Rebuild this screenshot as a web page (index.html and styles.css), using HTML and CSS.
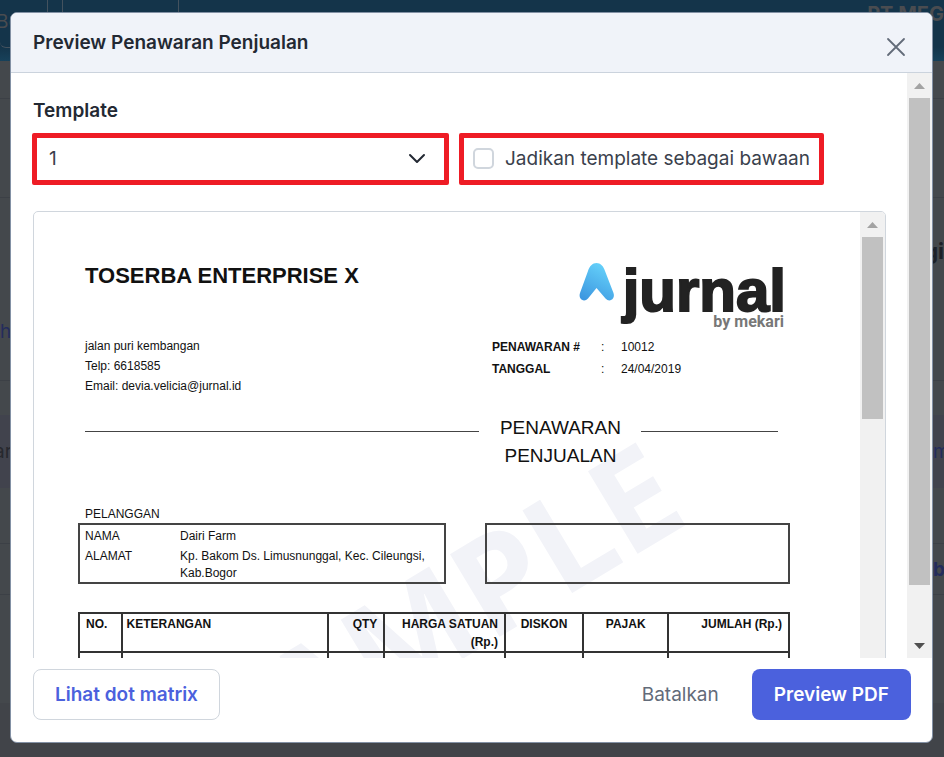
FILE: index.html
```
<!DOCTYPE html>
<html lang="id">
<head>
<meta charset="utf-8">
<title>Preview Penawaran Penjualan</title>
<link rel="stylesheet" href="styles.css">
</head>
<body>
<div class="page" aria-hidden="true">
  <div class="topbar">
    <div class="topbar-tab first">Be</div>
    <div class="topbar-tab"></div>
    <div class="company">PT MEG</div>
  </div>
  <div class="page-row gap-row"></div>
  <div class="page-row tall-row"></div>
  <div class="page-row title-row"><span></span><b>gi</b></div>
  <div class="page-row link-row"><span>h</span></div>
  <div class="page-row space-row"></div>
  <div class="page-row shade-row"><span>ar</span><a>m</a></div>
  <div class="page-row blank-row"></div>
  <div class="page-row foot-row"><span></span><b>ba</b></div>
</div>

<div class="modal" role="dialog" aria-labelledby="modalTitle">
  <div class="modal-header">
    <h1 class="modal-title" id="modalTitle">Preview Penawaran Penjualan</h1>
    <button class="close" aria-label="Tutup">
      <svg width="20" height="20" viewBox="0 0 20 20" fill="none" stroke="#626b79" stroke-width="1.800" stroke-linecap="round">
        <path d="M2 2l16 16M18 2L2 18"/>
      </svg>
    </button>
  </div>

  <div class="modal-body">
    <div class="modal-content">
      <label class="label" for="template">Template</label>
      <div class="options">
        <div class="marked select-box">
          <select id="template" class="select">
            <option>1</option>
          </select>
          <svg class="chevron" width="18" height="12" viewBox="0 0 18 12" fill="none" stroke="#232933" stroke-width="2" stroke-linecap="round" stroke-linejoin="round">
            <path d="M2 2l7 7 7-7"/>
          </svg>
        </div>
        <div class="marked check-box">
          <input type="checkbox" class="check" id="default">
          <label for="default">Jadikan template sebagai bawaan</label>
        </div>
      </div>

      <div class="frame">
        <div class="doc">
          <svg class="watermark" width="826" height="446" viewBox="0 0 826 446">
            <text transform="translate(658 309) rotate(-31)" text-anchor="end">SAMPLE</text>
          </svg>
          <div class="doc-header">
            <div>
              <h2 class="doc-company">TOSERBA ENTERPRISE X</h2>
              <div class="doc-address">
                jalan puri kembangan<br>
                Telp: 6618585<br>
                Email: devia.velicia@jurnal.id
              </div>
            </div>
            <div>
              <svg class="logo" width="208" height="74" viewBox="0 0 208 74">
                <defs>
                  <linearGradient id="mark" x1="0.7" y1="0" x2="0.2" y2="1">
                    <stop offset="0" stop-color="#66d3fb"/>
                    <stop offset="1" stop-color="#3d97e0"/>
                  </linearGradient>
                </defs>
                <path fill="url(#mark)" d="M10 9C11.500 4 14.500 1 18.500 1s7 3 8.500 8L35.500 31c2 6-4 10-8 5.500L18.500 26 10 36.500C6 41 0 37 2 31z"/>
                <text class="logo-name" x="208" y="49" text-anchor="end">jurnal</text>
                <text class="logo-by" x="206" y="65" text-anchor="end">by mekari</text>
              </svg>
              <table class="meta">
                <tr><th>PENAWARAN #</th><td class="colon">:</td><td>10012</td></tr>
                <tr><th>TANGGAL</th><td class="colon">:</td><td>24/04/2019</td></tr>
              </table>
            </div>
          </div>

          <div class="doc-title">
            <span class="rule rule-left"></span>
            <h3>PENAWARAN PENJUALAN</h3>
            <span class="rule rule-right"></span>
          </div>

          <div class="doc-label">PELANGGAN</div>
          <div class="parties">
            <dl class="party">
              <dt>NAMA</dt><dd>Dairi Farm</dd>
              <dt>ALAMAT</dt><dd>Kp. Bakom Ds. Limusnunggal, Kec. Cileungsi, Kab.Bogor</dd>
            </dl>
            <div class="party"></div>
          </div>

          <table class="items">
            <thead>
              <tr>
                <th class="col-no">NO.</th>
                <th class="col-desc">KETERANGAN</th>
                <th class="col-qty">QTY</th>
                <th class="col-price">HARGA SATUAN (Rp.)</th>
                <th class="col-disc">DISKON</th>
                <th class="col-tax">PAJAK</th>
                <th class="col-total">JUMLAH (Rp.)</th>
              </tr>
            </thead>
            <tbody>
              <tr><td></td><td></td><td></td><td></td><td></td><td></td><td></td></tr>
            </tbody>
          </table>
        </div>
        <div class="scrollbar">
          <svg class="arrow" width="11" height="6" viewBox="0 0 11 6"><path fill="#a3a3a3" d="M5.500 0L11 6H0z"/></svg>
          <div class="thumb thumb-doc"></div>
        </div>
      </div>
    </div>
    <div class="scrollbar">
      <svg class="arrow" width="11" height="6" viewBox="0 0 11 6"><path fill="#a3a3a3" d="M5.500 0L11 6H0z"/></svg>
      <div class="track"><div class="thumb thumb-body"></div></div>
      <svg class="arrow" width="11" height="6" viewBox="0 0 11 6"><path fill="#505050" d="M5.500 6L11 0H0z"/></svg>
    </div>
  </div>

  <div class="modal-footer">
    <button class="btn btn-outline">Lihat dot matrix</button>
    <button class="btn btn-text">Batalkan</button>
    <button class="btn btn-primary">Preview PDF</button>
  </div>
</div>
</body>
</html>
```
FILE: styles.css
```
* {
  box-sizing: border-box;
}

body {
  margin: 0;
  font-family: Inter, "Liberation Sans", sans-serif;
  font-size: 19px;
  color: #232933;
  background-color: #414449;
  overflow: hidden;
}

button,
select {
  font: inherit;
}

/* dimmed page behind the dialog */
.page {
  min-height: 703px;
  background-color: #44484c;
}

.topbar {
  display: flex;
  gap: 14px;
  height: 61px;
  background: linear-gradient(#14344a 47px, #17415a 61px);
  color: #4a4c50;
}

.topbar-tab {
  width: 117px;
  height: 48px;
  border: 1px solid #44525e;
  border-top: none;
  border-radius: 0 0 6px 6px;
}

.topbar-tab.first {
  width: 48px;
  border-left: none;
  line-height: 44px;
  text-indent: -4px;
}

.company {
  margin-left: auto;
  font-size: 20px;
  font-weight: 700;
  line-height: 28px;
}

.page-row {
  display: flex;
  justify-content: space-between;
  align-items: center;
  border-bottom: 1px solid #3c4046;
  color: #242c5c;
  white-space: nowrap;
}

.page-row b {
  width: 11px;
  overflow: hidden;
}

.gap-row {
  height: 38px;
}

.tall-row {
  height: 99px;
}

.title-row {
  height: 106px;
  color: #1c2027;
  font-size: 22px;
  border: none;
}

.title-row b {
  width: auto;
}

.link-row {
  height: 77px;
  padding-bottom: 22px;
}

.space-row {
  height: 34px;
  border: none;
}

.shade-row {
  height: 73px;
  background-color: #41434d;
  border: none;
}

.shade-row span {
  color: #26282e;
  text-indent: -6px;
}

.shade-row a {
  width: 11px;
  overflow: hidden;
}

.blank-row {
  height: 56px;
}

.foot-row {
  height: 51px;
}

/* dialog */
.modal {
  position: absolute;
  inset: 12px 11px 14px 10px;
  display: flex;
  flex-direction: column;
  background-color: #fff;
  border: 1px solid #8391a5;
  border-radius: 7px;
  overflow: hidden;
}

.modal-header {
  display: flex;
  justify-content: space-between;
  align-items: center;
  height: 60px;
  flex-shrink: 0;
  padding: 0 26px 0 22px;
  background-color: #f0f3f9;
  border-bottom: 1px solid #cbd3dd;
}

.modal-title {
  margin: 0;
  font-size: 19px;
  font-weight: 600;
}

.close {
  display: flex;
  margin-top: 8px;
  padding: 0;
  border: none;
  background: none;
  cursor: pointer;
}

.modal-body {
  display: flex;
  flex: 1;
  min-height: 0;
}

.modal-content {
  flex: 1;
  min-width: 0;
  padding: 26px 21px 0 22px;
  overflow: hidden;
}

.label {
  display: block;
  line-height: 24px;
  font-weight: 600;
}

.options {
  display: flex;
  gap: 10px;
  margin: 10px 0 26px -1px;
}

.marked {
  display: flex;
  align-items: center;
  height: 52px;
  border: 5px solid #ee1c25;
  border-radius: 2px;
  color: #3a414c;
}

.select-box {
  position: relative;
  width: 417px;
}

.select {
  width: 100%;
  height: 100%;
  padding: 0 12px 2px;
  border: none;
  appearance: none;
  background: #fff;
  color: #3a414c;
}

.chevron {
  position: absolute;
  right: 18px;
  pointer-events: none;
}

.check-box {
  gap: 11px;
  padding: 0 9px 2px;
  white-space: nowrap;
}

.check {
  width: 21px;
  height: 21px;
  margin: 0;
  appearance: none;
  background-color: #fff;
  border: 2px solid #d0d6dd;
  border-radius: 5px;
}

.frame {
  display: flex;
  height: 600px;
  border: 1px solid #d0d6dd;
  border-radius: 5px;
  overflow: hidden;
}

/* scrollbars */
.scrollbar {
  display: flex;
  flex-direction: column;
  align-items: center;
  width: 25px;
  flex-shrink: 0;
  background-color: #f1f1f1;
}

.arrow {
  margin: 10px 0 9px;
  flex-shrink: 0;
}

.track {
  flex: 1;
}

.thumb {
  width: 21px;
  background-color: #c1c1c1;
}

.thumb-doc {
  height: 182px;
}

.thumb-body {
  height: 91%;
}

/* printed quotation */
.doc {
  position: relative;
  flex: 1;
  min-width: 0;
  padding: 50px 70px 0 44px;
  font-family: "Liberation Sans", Arial, sans-serif;
  font-size: 12px;
  color: #111;
}

.watermark {
  position: absolute;
  top: 0;
  left: 0;
  fill: #f2f3f8;
  font: 700 135px "Open Sans", sans-serif;
}

.doc-header,
.doc-title,
.doc-label,
.parties,
.items {
  position: relative;
}

.doc-header {
  display: grid;
  grid-template-columns: 414fr 298fr;
}

.doc-company {
  margin: 2px 0 48px 7px;
  font-size: 22px;
  line-height: 24px;
}

.doc-address {
  padding-left: 7px;
  line-height: 20px;
}

.logo {
  display: block;
  margin: 0 4px 0 auto;
  overflow: visible;
}

.logo-name {
  font: 700 60px "Liberation Sans", Arial, sans-serif;
  fill: #222;
  stroke: #222;
  stroke-width: 2px;
}

.logo-by {
  font: 700 16px Roboto, sans-serif;
  fill: #777;
}

.meta {
  border-collapse: collapse;
  line-height: 22px;
}

.meta th,
.meta td {
  padding: 0;
  text-align: left;
}

.meta th {
  width: 109px;
}

.meta .colon {
  width: 20px;
}

.doc-title {
  display: flex;
  margin: 18px 12px 0 7px;
}

.doc-title h3 {
  flex: 0 0 162px;
  margin: 0;
  padding: 0 15px;
  font-size: 19px;
  font-weight: 400;
  line-height: 28px;
  text-align: center;
}

.rule {
  margin-top: 17px;
  border-top: 1px solid #444;
}

.rule-left {
  flex: 26;
}

.rule-right {
  flex: 9;
}

.doc-label {
  margin-top: 35px;
  padding-left: 7px;
  line-height: 18px;
}

.parties {
  display: grid;
  grid-template-columns: 368fr 305fr;
  gap: 39px;
}

.party {
  display: grid;
  grid-template-columns: 95px 1fr;
  align-content: start;
  row-gap: 3px;
  height: 61px;
  margin: 0;
  padding: 3px 5px;
  border: 2px solid #444;
  line-height: 17px;
}

.party dd {
  margin: 0;
}

.items {
  width: 100%;
  margin-top: 28px;
  border-collapse: collapse;
  table-layout: fixed;
}

.items th,
.items td {
  height: 39px;
  padding: 1px 6px 0;
  border: 2px solid #333;
  line-height: 18px;
  text-align: right;
  vertical-align: top;
}

.items .col-no {
  width: 6%;
  text-align: left;
}

.items .col-desc {
  width: 29%;
  padding-left: 4px;
  text-align: left;
}

.items .col-qty {
  width: 8%;
}

.items .col-price {
  width: 17%;
}

.items .col-disc {
  width: 11%;
  text-align: center;
}

.items .col-tax {
  width: 12%;
  text-align: center;
}

.items .col-total {
  width: 17%;
}

/* actions */
.modal-footer {
  display: flex;
  align-items: center;
  flex-shrink: 0;
  gap: 11px;
  padding: 11px 21px 22px 22px;
}

.btn {
  height: 51px;
  padding: 0 21px;
  border: 1px solid transparent;
  border-radius: 8px;
  background: none;
  font-weight: 600;
  cursor: pointer;
}

.btn-outline {
  margin-right: auto;
  border-color: #d0d6dd;
  color: #4b61dd;
}

.btn-text {
  color: #626b79;
  font-weight: 400;
}

.btn-primary {
  background-color: #4b61dd;
  color: #fff;
}
```
